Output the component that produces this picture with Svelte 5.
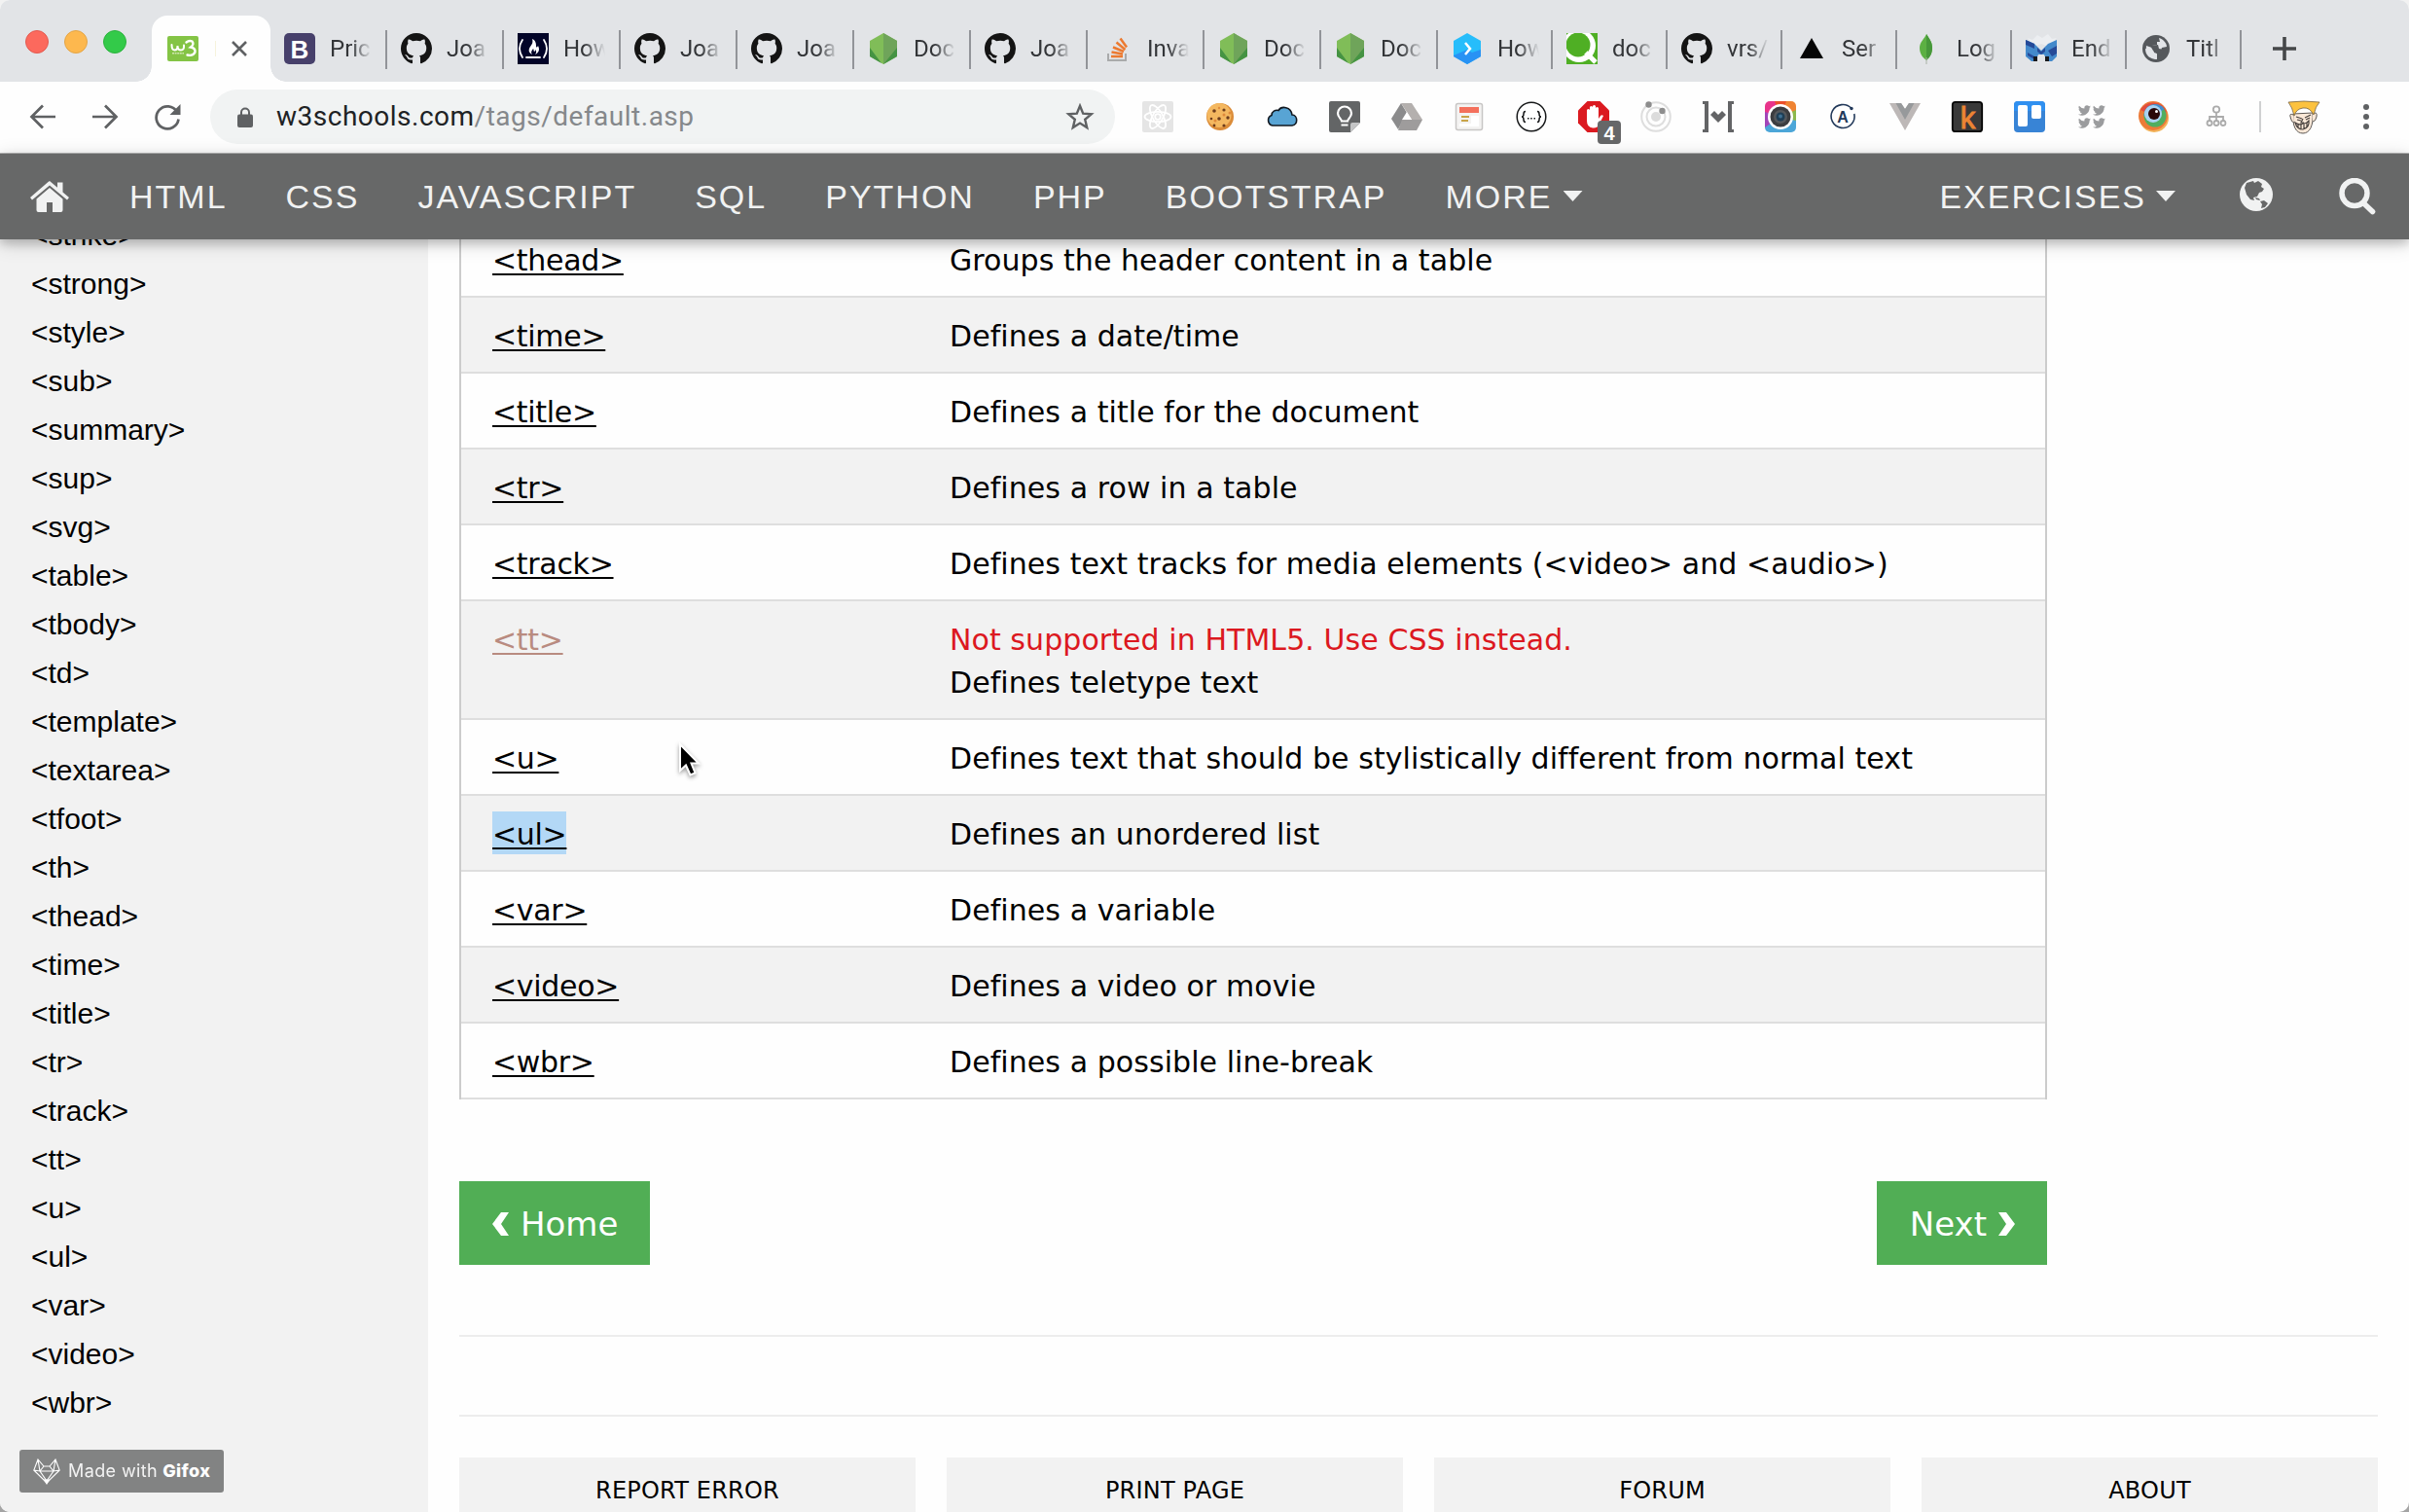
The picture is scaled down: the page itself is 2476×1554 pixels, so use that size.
<script>
  const tabs = [
    ['bootstrap', 'Pric'], ['github', 'Joa'], ['fcc', 'How'], ['github', 'Joa'], ['github', 'Joa'],
    ['node', 'Doc'], ['github', 'Joa'], ['stack', 'Inva'], ['node', 'Doc'], ['node', 'Doc'],
    ['hashnode', 'How'], ['qt', 'doc'], ['github', 'vrs/'], ['zeit', 'Ser'], ['mongo', 'Log'],
    ['endpoint', 'End'], ['globe', 'Titl']
  ];
  const extensions = [
    'react', 'cookie', 'cloud', 'keep', 'drive', 'news', 'swagger', 'block', 'orbit', 'heart',
    'camera', 'apollo', 'vue', 'klipper', 'trello', 'birds', 'eye', 'tree'
  ];
  const menu = ['HTML', 'CSS', 'JAVASCRIPT', 'SQL', 'PYTHON', 'PHP', 'BOOTSTRAP'];
  const sidebar = [
    'strike', 'strong', 'style', 'sub', 'summary', 'sup', 'svg', 'table', 'tbody', 'td', 'template',
    'textarea', 'tfoot', 'th', 'thead', 'time', 'title', 'tr', 'track', 'tt', 'u', 'ul', 'var',
    'video', 'wbr'
  ];
  const rows = [
    { tag: 'thead', text: 'Groups the header content in a table' },
    { tag: 'time', text: 'Defines a date/time' },
    { tag: 'title', text: 'Defines a title for the document' },
    { tag: 'tr', text: 'Defines a row in a table' },
    { tag: 'track', text: 'Defines text tracks for media elements (<video> and <audio>)' },
    { tag: 'tt', text: 'Defines teletype text', old: true },
    { tag: 'u', text: 'Defines text that should be stylistically different from normal text' },
    { tag: 'ul', text: 'Defines an unordered list', selected: true },
    { tag: 'var', text: 'Defines a variable' },
    { tag: 'video', text: 'Defines a video or movie' },
    { tag: 'wbr', text: 'Defines a possible line-break' }
  ];
  const footer = ['REPORT ERROR', 'PRINT PAGE', 'FORUM', 'ABOUT'];
</script>

{#snippet icon(name)}
  <svg class="icon" viewBox="0 0 32 32" aria-hidden="true">
    {#if name === 'bootstrap'}
      <rect width="32" height="32" rx="5" fill="#47406b" />
      <text x="16" y="25.5" text-anchor="middle" class="bold" font-size="26" fill="#fff">B</text>
    {:else if name === 'github'}
      <path transform="scale(2)" fill="#141414" d="M8 0C3.58 0 0 3.58 0 8c0 3.54 2.29 6.53 5.47 7.59.4.07.55-.17.55-.38 0-.19-.01-.82-.01-1.49-2.01.37-2.53-.49-2.69-.94-.09-.23-.48-.94-.82-1.13-.28-.15-.68-.52-.01-.53.63-.01 1.08.58 1.23.82.72 1.21 1.87.87 2.33.66.07-.52.28-.87.51-1.07-1.78-.2-3.64-.89-3.64-3.95 0-.87.31-1.59.82-2.15-.08-.2-.36-1.02.08-2.12 0 0 .67-.21 2.2.82.64-.18 1.32-.27 2-.27.68 0 1.36.09 2 .27 1.53-1.04 2.2-.82 2.2-.82.44 1.1.16 1.92.08 2.12.51.56.82 1.27.82 2.15 0 3.07-1.87 3.75-3.65 3.95.29.25.54.73.54 1.48 0 1.07-.01 1.93-.01 2.2 0 .21.15.46.55.38A8.013 8.013 0 0016 8c0-4.42-3.58-8-8-8z" />
    {:else if name === 'fcc'}
      <rect width="32" height="32" fill="#020428" />
      <path d="M5 7Q-1 16 5 25M27 7Q33 16 27 25M9 25h14" fill="none" stroke="#fff" stroke-width="1.8" stroke-linecap="round" />
      <path d="M15 6c1 4 0 5-2 8s-2 6 2 8c-2-3 0-4 1-6 1 1 0 2 1 3 1 0 1-1 1-2 2 2 1 4 0 5 4-2 5-5 3-9-1 2-2 2-2 0 0-3-1-6-4-7z" fill="#fff" />
    {:else if name === 'node'}
      <path d="M16 0l14 8v16l-14 8-14-8V8z" fill="#80bd58" />
      <path d="M16 0l14 8v9L16 32z" fill="#6fa45a" />
      <path d="M30 15v9l-14 8z" fill="#459343" />
      <path d="M2 15l12 16-12-7z" fill="#459343" />
    {:else if name === 'stack'}
      <path d="M7 21v7h18v-7" fill="none" stroke="#a9aaab" stroke-width="2" />
      <path d="M10 24h12M10.500 19.500l11.500 2M12 14.500l11 4.500M15.500 9.500l9 7.500M19.500 5.500l6.500 9" fill="none" stroke="#ec7a31" stroke-width="2.500" />
    {:else if name === 'hashnode'}
      <path d="M16 0l14 8v16l-14 8-14-8V8z" fill="#26bdfb" />
      <path d="M2 23l14-6 5 3 9-3v7l-14 8-14-8z" fill="#2892f4" />
      <path d="M14 10l5 6-5 6" fill="none" stroke="#fff" stroke-width="2.500" />
    {:else if name === 'qt'}
      <clipPath id="qt-clip"><rect width="32" height="32" /></clipPath>
      <g clip-path="url(#qt-clip)">
        <rect width="32" height="32" fill="#4faf24" />
        <circle cx="13" cy="13" r="17" fill="#fff" />
        <circle cx="12" cy="12" r="12.500" fill="#4faf24" />
        <path d="M20 20l10 10" stroke="#fff" stroke-width="5" />
      </g>
    {:else if name === 'zeit'}
      <path d="M16 5l12 21H4z" fill="#050505" />
    {:else if name === 'mongo'}
      <path d="M16 1c3 5 6 8 6 14 0 7-3 10-6 13-4-3-7-7-7-13 0-6 5-9 7-14z" fill="#5cb043" />
      <path d="M16 1c3 5 6 8 6 14 0 7-3 10-6 13z" fill="#47983a" />
      <path d="M16 25v7" stroke="#aab2a6" />
    {:else if name === 'endpoint'}
      <path d="M2 5l5 2 5-5 5 3 6-4 4 5 5-1-8 9-8-3-8 3z" fill="#eceef1" />
      <path d="M0 7l9 4 7 7 7-7 9-4v17l-5 5h-5l-3-7h-6l-3 7H6l-6-5z" fill="#4389cb" />
      <path d="M0 7l9 4v5l-9-4zM23 18l9-5v8l-5 3zM2 20l7 4v3l-7-4zM12 15l4 4 4-4v4l-4 3-4-3z" fill="#264a98" />
      <path d="M8 24h4v5H8zM20 24h4v5h-4z" fill="#17191e" />
    {:else if name === 'globe'}
      <circle cx="16" cy="16" r="14" fill="#55585c" />
      <path d="M19 5c4 1 8 5 8 9l-5 1-1 3-8-1 1 4 3 1v5C10 27 5 23 5 16l5 1 2-4 5-1v-3h3z" fill="#e2e4e8" />
      <path d="M6 13l6 2 2 5 3 1-1 6c-8-2-11-8-10-14z" fill="#e2e4e8" />
      <path d="M10 13l8-1 1 4 5 1-2 5-5 3v-4l-4-3z" fill="#55585c" />
    {:else if name === 'react'}
      <rect width="32" height="32" rx="2" fill="#e5e5e5" />
      <g fill="none" stroke="#fff" stroke-width="1.800">
        <ellipse cx="16" cy="16" rx="13.500" ry="5.200" />
        <ellipse cx="16" cy="16" rx="13.500" ry="5.200" transform="rotate(60 16 16)" />
        <ellipse cx="16" cy="16" rx="13.500" ry="5.200" transform="rotate(120 16 16)" />
        <circle cx="16" cy="16" r="2.800" />
      </g>
    {:else if name === 'cookie'}
      <circle cx="16" cy="16" r="14" fill="#db8c39" />
      <circle cx="15" cy="14.500" r="12.500" fill="#f4b860" />
      <g fill="#6e3d1d"><circle cx="10" cy="10" r="1.800" /><circle cx="20" cy="9" r="1.600" /><circle cx="15" cy="18" r="1.800" /><circle cx="7" cy="18" r="1.300" /><circle cx="24" cy="17" r="1.700" /><circle cx="10" cy="25" r="1.400" /><circle cx="20" cy="25" r="1.600" /></g>
      <g fill="#e08a3c"><circle cx="15" cy="7" r="1.200" /><circle cx="26" cy="12" r="1.500" /><circle cx="20" cy="14" r="1.500" /><circle cx="11" cy="20" r="1.500" /></g>
    {:else if name === 'cloud'}
      <path d="M6 25a5.500 5.500 0 0 1-1-10.500c0-4 4-6 7-5 3-5 13-4 14 4.500 6 0 6.500 10.500 0 11z" fill="#58a4d4" stroke="#111820" stroke-width="1.600" />
    {:else if name === 'keep'}
      <path d="M2 0h28a2 2 0 0 1 2 2v20L22 32H2a2 2 0 0 1-2-2V2a2 2 0 0 1 2-2z" fill="#636566" />
      <path d="M32 22L22 32v-8a2 2 0 0 1 2-2z" fill="#c4c5c6" />
      <path d="M13 20.500c0-2-4-4-4-8a7 7 0 0 1 14 0c0 4-4 6-4 8zM12.500 24.500h7" fill="none" stroke="#fff" stroke-width="2.200" />
    {:else if name === 'drive'}
      <path d="M10 2l6 10-9 17-7-11z" fill="#8b8b8c" />
      <path d="M10 2h11l11 17H21z" fill="#b4b0ae" />
      <path d="M11 19h21l-6 11H7z" fill="#9e9c9c" />
      <path d="M16 11l5 8H11z" fill="#fff" />
    {:else if name === 'news'}
      <rect x="2.500" y="2.500" width="27" height="27" rx="2" fill="#f4f3f2" stroke="#c8c6c5" stroke-width="1.500" />
      <path d="M6 6h20v6H6z" fill="#f4705c" />
      <path d="M8 15h8v2H8zM8 19h7v2H8z" fill="#c9a449" />
      <path d="M18 15h8v11H6v-3h12z" fill="#fff" />
    {:else if name === 'swagger'}
      <circle cx="16" cy="16" r="14.800" fill="#fff" stroke="#17191a" stroke-width="1.500" />
      <path d="M10 10.500c-2 0-2 1-2 2.500 0 2-.5 3-2 3 1.500 0 2 1 2 3 0 1.500 0 2.500 2 2.500M22 10.500c2 0 2 1 2 2.500 0 2 .5 3 2 3-1.500 0-2 1-2 3 0 1.500 0 2.500-2 2.500" fill="none" stroke="#17191a" stroke-width="1.500" />
      <path d="M12 17h1.500v1.500H12zM15.200 17h1.500v1.500h-1.500zM18.500 17H20v1.500h-1.500z" fill="#17191a" />
    {:else if name === 'block'}
      <path d="M9.500 0h13L32 9.500v13L22.500 32h-13L0 22.500v-13z" fill="#db1a20" />
      <path d="M9 16V9q1.500-2 3 0v5V6q1.500-2 3 0v8V5q1.500-2 3 0v9V7q1.500-2 3 0v11l2-3q1.500-1.500 3 0l-4 8q-2 5-7 4.500Q9 27 9 20z" fill="#fff" />
    {:else if name === 'orbit'}
      <g fill="none" stroke="#dedede" stroke-width="2"><circle cx="16" cy="16" r="14.800" /><circle cx="16" cy="16" r="9.500" /></g>
      <circle cx="16" cy="16" r="5" fill="#dcdcdc" /><circle cx="8.500" cy="3.500" r="3.200" fill="#8d8d8d" /><circle cx="22.500" cy="10" r="3.200" fill="#8d8d8d" />
    {:else if name === 'heart'}
      <path d="M0 0h6v32H0v-3h2V3H0zM26 0h6v3h-2v26h2v3h-6zM8 14l4-4 4 4 4-4 4 4-8 8z" fill="#636466" />
    {:else if name === 'camera'}
      <clipPath id="camera-clip"><rect width="32" height="32" rx="5" /></clipPath>
      <g clip-path="url(#camera-clip)">
        <path d="M0 0h12l4 16L0 12z" fill="#e8348b" /><path d="M10 0h13l-7 16z" fill="#ea4f2a" /><path d="M22 0h10v11l-16 5z" fill="#ef8332" />
        <path d="M32 9v13l-16-6z" fill="#8db84b" /><path d="M32 20v12H0v-7l16-9z" fill="#4ca6d8" /><path d="M0 11l16 5L0 27z" fill="#a145b8" />
      </g>
      <circle cx="16" cy="16" r="13" fill="#fff" /><circle cx="16" cy="16" r="10.500" fill="#3c3d40" /><circle cx="16" cy="16" r="7" fill="#55585c" /><circle cx="16" cy="16" r="4.500" fill="#1f3e55" /><circle cx="16" cy="15.500" r="2" fill="#3e6f92" />
    {:else if name === 'apollo'}
      <path d="M25 7.500A12 12 0 1 0 27.800 13" fill="none" stroke="#22395a" stroke-width="1.600" /><circle cx="25" cy="7.500" r="1.700" fill="#22395a" />
      <text x="16" y="21.500" text-anchor="middle" class="bold" font-size="16" fill="#22395a">A</text>
    {:else if name === 'vue'}
      <path d="M0 2h12l4 6 4-6h12L16 30z" fill="#bdb8b7" /><path d="M6.500 2H12l4 6 4-6h5.500L16 19z" fill="#97999b" />
    {:else if name === 'klipper'}
      <rect x=".8" y=".8" width="30.400" height="30.400" rx="3" fill="#393939" stroke="#050505" stroke-width="1.800" />
      <text x="16.500" y="28" text-anchor="middle" class="bold thin" font-size="31" fill="#ec8433">k</text>
    {:else if name === 'trello'}
      <rect width="32" height="32" rx="4" fill="#3884d6" /><path d="M0 10V4a4 4 0 0 1 4-4h24a4 4 0 0 1 4 4v6z" fill="#3090f0" />
      <rect x="4" y="4" width="10" height="22" rx="2" fill="#fff" /><rect x="18" y="4" width="10" height="14" rx="2" fill="#fff" />
    {:else if name === 'birds'}
      {#each [[2, 3], [17, 3], [2, 16], [17, 16]] as [x, y]}
        <path transform="translate({x} {y}) scale(.54)" d="M24 4.600a10 10 0 0 1-2.800.8 5 5 0 0 0 2.100-2.700 10 10 0 0 1-3.100 1.200 4.900 4.900 0 0 0-8.400 4.500A14 14 0 0 1 1.700 3.100a4.900 4.900 0 0 0 1.500 6.600A4.900 4.900 0 0 1 1 9v.1a4.900 4.900 0 0 0 3.900 4.800 5 5 0 0 1-2.200.1 4.900 4.900 0 0 0 4.600 3.400A9.900 9.900 0 0 1 0 19.500a14 14 0 0 0 7.500 2.200c9.100 0 14.300-7.700 14-14.600A10 10 0 0 0 24 4.600z" fill="#9b9c9e" />
      {/each}
    {:else if name === 'eye'}
      <circle cx="16" cy="17" r="15" fill="#f2b35a" /><circle cx="15" cy="15" r="15" fill="#ec7b38" /><path d="M2 9a15 15 0 0 1 27 2L16 16z" fill="#e14c3d" />
      <circle cx="17" cy="15" r="11.500" fill="#4fae60" /><path d="M5.500 15a11.500 11.500 0 0 1 21-7L16 16z" fill="#3f8fd0" /><circle cx="15" cy="13" r="9" fill="#a9d3f2" /><circle cx="16" cy="13" r="6" fill="#2b0808" /><circle cx="18.500" cy="10.500" r="1.500" fill="#fff" />
    {:else if name === 'tree'}
      <g fill="none" stroke="#ababab" stroke-width="1.800"><circle cx="16" cy="8.500" r="3.200" /><circle cx="9" cy="22.500" r="2.500" /><circle cx="16" cy="22.500" r="2.500" /><circle cx="23" cy="22.500" r="2.500" /><path d="M16 12v8M9 20v-4h14v4" /></g>
    {:else if name === 'avatar'}
      <path d="M5 13C4 26 8 33 15 33s11-8 10-21z" fill="#fae8d8" stroke="#5c5854" />
      <path d="M5 14q-4-2-3 2 1 6 4 6M25 13q5-3 4 3-1 5-4 5" fill="#fae8d8" stroke="#5c5854" />
      <path d="M0 1q16-2 32 0-4 4-6 13Q22 6 15 7 8 8 6 15 4 6 0 1z" fill="#fcc23f" stroke="#776445" stroke-width=".8" />
      <path d="M7 22q4 3 8 1 4 0 6-3 1 7-6 9-6 0-8-7zM8 16l6 2M17 17l6-3M9 19l4 1M18 19l4-2M15 18l-2 4h3M10 24v3M13 24v4M16 23v5M19 22v4" fill="none" stroke="#48423f" stroke-width="1.200" />
    {/if}
  </svg>
{/snippet}

<div class="window">
  <header class="tabstrip">
    <div class="lights"><i class="red"></i><i class="amber"></i><i class="green"></i></div>
    <div class="active-tab">
      <svg class="w3" viewBox="0 0 32 26" aria-hidden="true">
        <rect width="32" height="26" rx="2" fill="#84c445" />
        <path d="M4.500 9q0 5.500 3 5.500t3-4.500q0 4.500 3.500 4.500t3-5" fill="none" stroke="#fff" stroke-width="2" stroke-linecap="round" />
        <path d="M19.500 6.500q3-2.500 6-1 2.500 3-1.500 6 5 1 4.500 5-2 4.500-8 3" fill="none" stroke="#fff" stroke-width="2.400" stroke-linecap="round" />
        <path d="M5 17.700h12" stroke="#cfe6b0" stroke-width="1.500" stroke-dasharray="2 .6" />
      </svg>
      <span class="sliver"></span>
      <svg class="close" viewBox="0 0 16 16"><path d="M1 1l14 14M15 1L1 15" stroke="#5f6163" stroke-width="2.600" /></svg>
    </div>
    {#each tabs as [name, label], i}
      <div class="tab" class:short={i > 9}>
        {@render icon(name)}
        <span class="label">{label}</span>
        <span class="divider"></span>
      </div>
    {/each}
    <svg class="plus" viewBox="0 0 24 24"><path d="M12 0v24M0 12h24" stroke="#454749" stroke-width="3.600" /></svg>
  </header>

  <div class="toolbar">
    <div class="history">
      <svg viewBox="0 0 28 28"><path d="M27 14H3M14 2.500L2.500 14 14 25.500" /></svg>
      <svg viewBox="0 0 28 28"><path d="M1 14h24M14 2.500L25.500 14 14 25.500" /></svg>
      <svg viewBox="0 0 28 28"><path d="M24 9A11.500 11.500 0 1 0 25.500 16.500" /><path d="M27.500 1v11h-11z" class="solid" /></svg>
    </div>
    <div class="omnibox">
      <svg class="lock" viewBox="0 0 16 21"><path d="M4 9V5.500a4 4 0 0 1 8 0V9" fill="none" stroke="#5f6163" stroke-width="2" /><rect y="7.500" width="16" height="13.500" rx="2" fill="#5f6163" /></svg>
      <span class="url">w3schools.com<em>/tags/default.asp</em></span>
      <svg class="star" viewBox="0 0 30 28"><path d="M15 2.800l3.200 7.900 8.500.6-6.500 5.500 2 8.300-7.200-4.500-7.200 4.500 2-8.300-6.500-5.500 8.500-.6z" fill="none" stroke="#5f6163" stroke-width="2.400" /></svg>
    </div>
    <div class="extensions">
      {#each extensions as name}
        <div class="ext">
          {@render icon(name)}
          {#if name === 'block'}<span class="badge">4</span>{/if}
        </div>
      {/each}
    </div>
    <span class="bar-divider"></span>
    <div class="avatar">{@render icon('avatar')}</div>
    <div class="dots"><i></i><i></i><i></i></div>
  </div>

  <nav class="site-nav">
    <svg class="home" viewBox="0 0 40 32"><path d="M20 7l13.500 11.500V30a2 2 0 0 1-2 2H23V22h-6v10H8.500a2 2 0 0 1-2-2V18.500z" /><path d="M20 0l8 6.800V1.500h5.500v10L40 17l-2 2.500L20 4.500 2 19.500 0 17 18.500 1z" /></svg>
    {#each menu as item}<span class="link">{item}</span>{/each}
    <span class="link">MORE <i class="caret"></i></span>
    <span class="link right">EXERCISES <i class="caret"></i></span>
    <svg class="earth" viewBox="0 0 34 34">
      <circle cx="17" cy="17" r="17" />
      <path class="land" d="M7 5l7-2 1 2 4-2 4 3-1 3 3 2-2 3-3 1-2 4-4 1 1 3-4-1-4-5-2-7zM21 24l4-1 4 3-3 4-4 1 1-4zM16 20l4 1 1 2-4-1z" />
    </svg>
    <svg class="search" viewBox="0 0 38 38"><circle cx="16" cy="15.500" r="13" /><path d="M25 25.500l9.500 9" /></svg>
  </nav>

  <div class="page">
    <aside class="sidebar">
      {#each sidebar as tag}<a href="#{tag}">&lt;{tag}&gt;</a>{/each}
    </aside>
    <main>
      <div class="table">
        {#each rows as row}
          <div class="row">
            <div class="tag"><a href="#{row.tag}" class:old={row.old} class:selected={row.selected}>&lt;{row.tag}&gt;</a></div>
            <div class="text">
              {#if row.old}<span class="warning">Not supported in HTML5. Use CSS instead.</span>{/if}
              {row.text}
            </div>
          </div>
        {/each}
      </div>
      <div class="pager">
        <a href="#home"><svg viewBox="0 0 17 24"><path d="M9 0h8l-8 12 8 12H9L0 12z" /></svg>Home</a>
        <a href="#next" class="next">Next<svg viewBox="0 0 17 24"><path d="M8 0H0l8 12-8 12h8l9-12z" /></svg></a>
      </div>
      <hr />
      <hr class="second" />
      <div class="footer">
        {#each footer as item}<a href="#footer">{item}</a>{/each}
      </div>
    </main>
  </div>

  <div class="gifox">
    <svg viewBox="0 0 28 27"><path d="M5 1L.8 12 14 25 27.200 12 23 1l-6 7h-6zM5 1l2 12 7 10 7-10 2-12M11 8l-4 5L.8 12M17 8l4 5 6.200-1M5 1l6 7M7 13h14" fill="none" stroke="#fff" stroke-width="1.100" /><path d="M10.500 21.500h7L14 27z" fill="#fff" /></svg>
    <span>Made with</span><b>Gifox</b>
  </div>
  <svg class="cursor" viewBox="0 0 26 38"><path d="M3 3v27l6-5.500 4.500 10 5-2L14.500 22.500H22z" fill="#000" stroke="#fff" stroke-width="2" /></svg>
</div>

<style>
  :global(body) { background: linear-gradient(#f2f2f2 50%, #a4a4a4 50%); }
  * { box-sizing: border-box; }
  a { color: inherit; text-decoration: none; }
  svg { display: block; flex: none; }
  .window { position: relative; display: flex; flex-direction: column; width: 2476px; height: 1554px; overflow: hidden; border-radius: 10px; background: #fefefe; color: #000; }
  .icon { width: 32px; height: 32px; overflow: visible; }
  .bold { font-family: "Liberation Sans", sans-serif; font-weight: 700; }
  .thin { font-weight: 400; stroke: #ec8433; stroke-width: 1; }

  .tabstrip { display: flex; height: 84px; flex: none; background: #e2e4e7; }
  .lights { display: flex; gap: 16px; width: 156px; padding: 31px 0 0 26px; }
  .lights i { width: 24px; height: 24px; border-radius: 50%; }
  .red { background: #fc695d; border: 1px solid #e25a50; }
  .amber { background: #fdb84e; border: 1px solid #e3a547; }
  .green { background: #33ca49; border: 1px solid #2cb23e; }
  .active-tab { position: relative; display: flex; align-items: center; width: 122px; height: 68px; margin-top: 16px; padding: 0 16px; border-radius: 16px 16px 0 0; background: #fefefe; }
  .active-tab::before, .active-tab::after { content: ""; position: absolute; bottom: 0; width: 16px; height: 16px; }
  .active-tab::before { left: -16px; background: radial-gradient(circle at 0 0, #e2e4e7 15.500px, #fefefe 16px); }
  .active-tab::after { right: -16px; background: radial-gradient(circle at 100% 0, #e2e4e7 15.500px, #fefefe 16px); }
  .w3 { width: 32px; height: 26px; }
  .sliver { width: 1px; height: 16px; margin-left: 17px; background: #f6f3dc; }
  .close { width: 16px; height: 16px; margin-left: 16px; }
  .tab { display: flex; align-items: center; width: 120px; padding-left: 14px; height: 68px; margin-top: 16px; }
  .tab.short { width: 118px; }
  .label { width: 43px; margin-left: 15px; overflow: hidden; white-space: nowrap; font: 24px/32px Roboto, sans-serif; color: #333538; -webkit-mask-image: linear-gradient(90deg, #000 50%, transparent 100%); mask-image: linear-gradient(90deg, #000 50%, transparent 100%); }
  .divider { width: 2px; height: 40px; margin-left: auto; margin-top: 2px; background: #929499; }
  .plus { width: 24px; height: 24px; margin: 38px 0 0 32px; }

  .toolbar { display: flex; align-items: center; height: 74px; flex: none; padding-bottom: 1px; border-bottom: 1px solid #b5b5b5; background: #fefefe; }
  .history { display: flex; gap: 36px; width: 216px; padding-left: 30px; }
  .history svg { width: 28px; height: 28px; fill: none; stroke: #5f6163; stroke-width: 2.700; }
  .history .solid { fill: #5f6163; stroke: none; }
  .omnibox { display: flex; align-items: center; width: 930px; height: 56px; padding: 0 21px 0 28px; border-radius: 28px; background: #f1f3f3; }
  .lock { width: 16px; height: 21px; }
  .url { margin-left: 24px; font: 28px/40px Roboto, sans-serif; letter-spacing: .5px; color: #202224; }
  .url em { font-style: normal; color: #85888b; }
  .star { width: 30px; height: 28px; margin-left: auto; }
  .extensions { display: flex; gap: 32px; margin-left: 28px; }
  .ext { position: relative; }
  .badge { position: absolute; left: 20px; top: 20px; width: 24px; height: 24px; border-radius: 4px; background: #666768; color: #fff; font: 700 20px/26px "Liberation Sans", sans-serif; text-align: center; }
  .bar-divider { width: 2px; height: 32px; margin-left: 28px; background: #cfd0d1; }
  .avatar { margin-left: 28px; }
  .dots { display: flex; flex-direction: column; gap: 4px; margin-left: 45px; }
  .dots i { width: 6px; height: 6px; border-radius: 50%; background: #5f6163; }

  .site-nav { position: relative; z-index: 2; display: flex; align-items: center; height: 88px; flex: none; padding: 0 34px 0 31px; background: #676868; color: #f1f2f2; fill: #f1f2f2; box-shadow: 0 4px 10px rgba(0, 0, 0, .2), 0 4px 20px rgba(0, 0, 0, .16); font: 34px/50px "Liberation Sans", sans-serif; letter-spacing: 2px; }
  .home { width: 40px; height: 32px; margin-right: 62px; }
  .link { display: flex; align-items: center; margin-right: 60px; padding-bottom: 1px; }
  .caret { width: 20px; height: 11px; margin-left: 11px; background: #f1f2f2; clip-path: polygon(0 0, 100% 0, 50% 100%); }
  .right { margin-left: auto; margin-right: 66px; }
  .right .caret { margin-left: 10px; }
  .earth { width: 34px; height: 34px; margin-top: -4px; }
  .land { fill: #676868; }
  .search { width: 38px; height: 38px; margin-left: 68px; fill: none; stroke: #f1f2f2; stroke-width: 5.500; stroke-linecap: round; }

  .page { display: flex; height: 1308px; overflow: hidden; }
  .sidebar { width: 440px; flex: none; background: #f2f2f2; padding-left: 32px; font: 30px/50px "Liberation Sans", sans-serif; }
  .sidebar a { display: block; }
  .sidebar a:first-child { margin-top: -29px; }
  main { width: 2004px; padding-left: 32px; font: 30px/44px "DejaVu Sans", sans-serif; }
  .table { width: 1632px; margin-top: -18px; border: 2px solid #ccc; border-width: 0 2px; }
  .row { display: flex; padding: 16px 0 16px 32px; border-bottom: 2px solid #dedede; }
  .row:nth-child(even) { background: #f2f2f2; }
  .tag { width: 470px; letter-spacing: -.3px; }
  .tag a { display: inline-block; height: 44px; padding-top: 2px; vertical-align: top; text-decoration: underline; text-decoration-thickness: 2px; text-underline-offset: 3px; text-decoration-skip-ink: none; }
  .text { padding-top: 2px; margin-bottom: -2px; letter-spacing: .07px; }
  .old { color: #b98b80; }
  .selected { background: #b3d8f6; }
  .warning { display: block; color: #dc1820; }
  .pager { display: flex; justify-content: space-between; width: 1632px; margin-top: 84px; }
  .pager a { display: flex; align-items: center; gap: 12px; height: 86px; padding: 1px 33px 0 34px; background: #51ae55; color: #fff; font-size: 34px; }
  .pager .next { padding: 1px 33px 0 34px; }
  .pager svg { width: 17px; height: 24px; fill: #fff; }
  hr { height: 2px; width: 1972px; margin: 72px 0 0; border: 0; background: #ededed; }
  hr.second { margin-top: 80px; }
  .footer { display: grid; grid-template-columns: repeat(4, 1fr); gap: 32px; margin-top: 42px; width: 1972px; }
  .footer a { height: 90px; padding-top: 12px; background: #f2f2f2; text-align: center; font-size: 24px; letter-spacing: .2px; }

  .gifox { position: absolute; left: 20px; top: 1490px; display: flex; align-items: center; width: 210px; height: 44px; padding-left: 14px; border-radius: 3px; background: #828383; color: #fff; font: 18px/24px Inter, sans-serif; }
  .gifox svg { width: 28px; height: 27px; }
  .gifox span { margin-left: 8px; opacity: .9; letter-spacing: .4px; }
  .gifox b { margin-left: 5px; font-weight: 800; letter-spacing: .4px; }
  .cursor { position: absolute; left: 696px; top: 762px; width: 26px; height: 38px; filter: drop-shadow(0 2px 2px rgba(0, 0, 0, .4)); }
</style>
